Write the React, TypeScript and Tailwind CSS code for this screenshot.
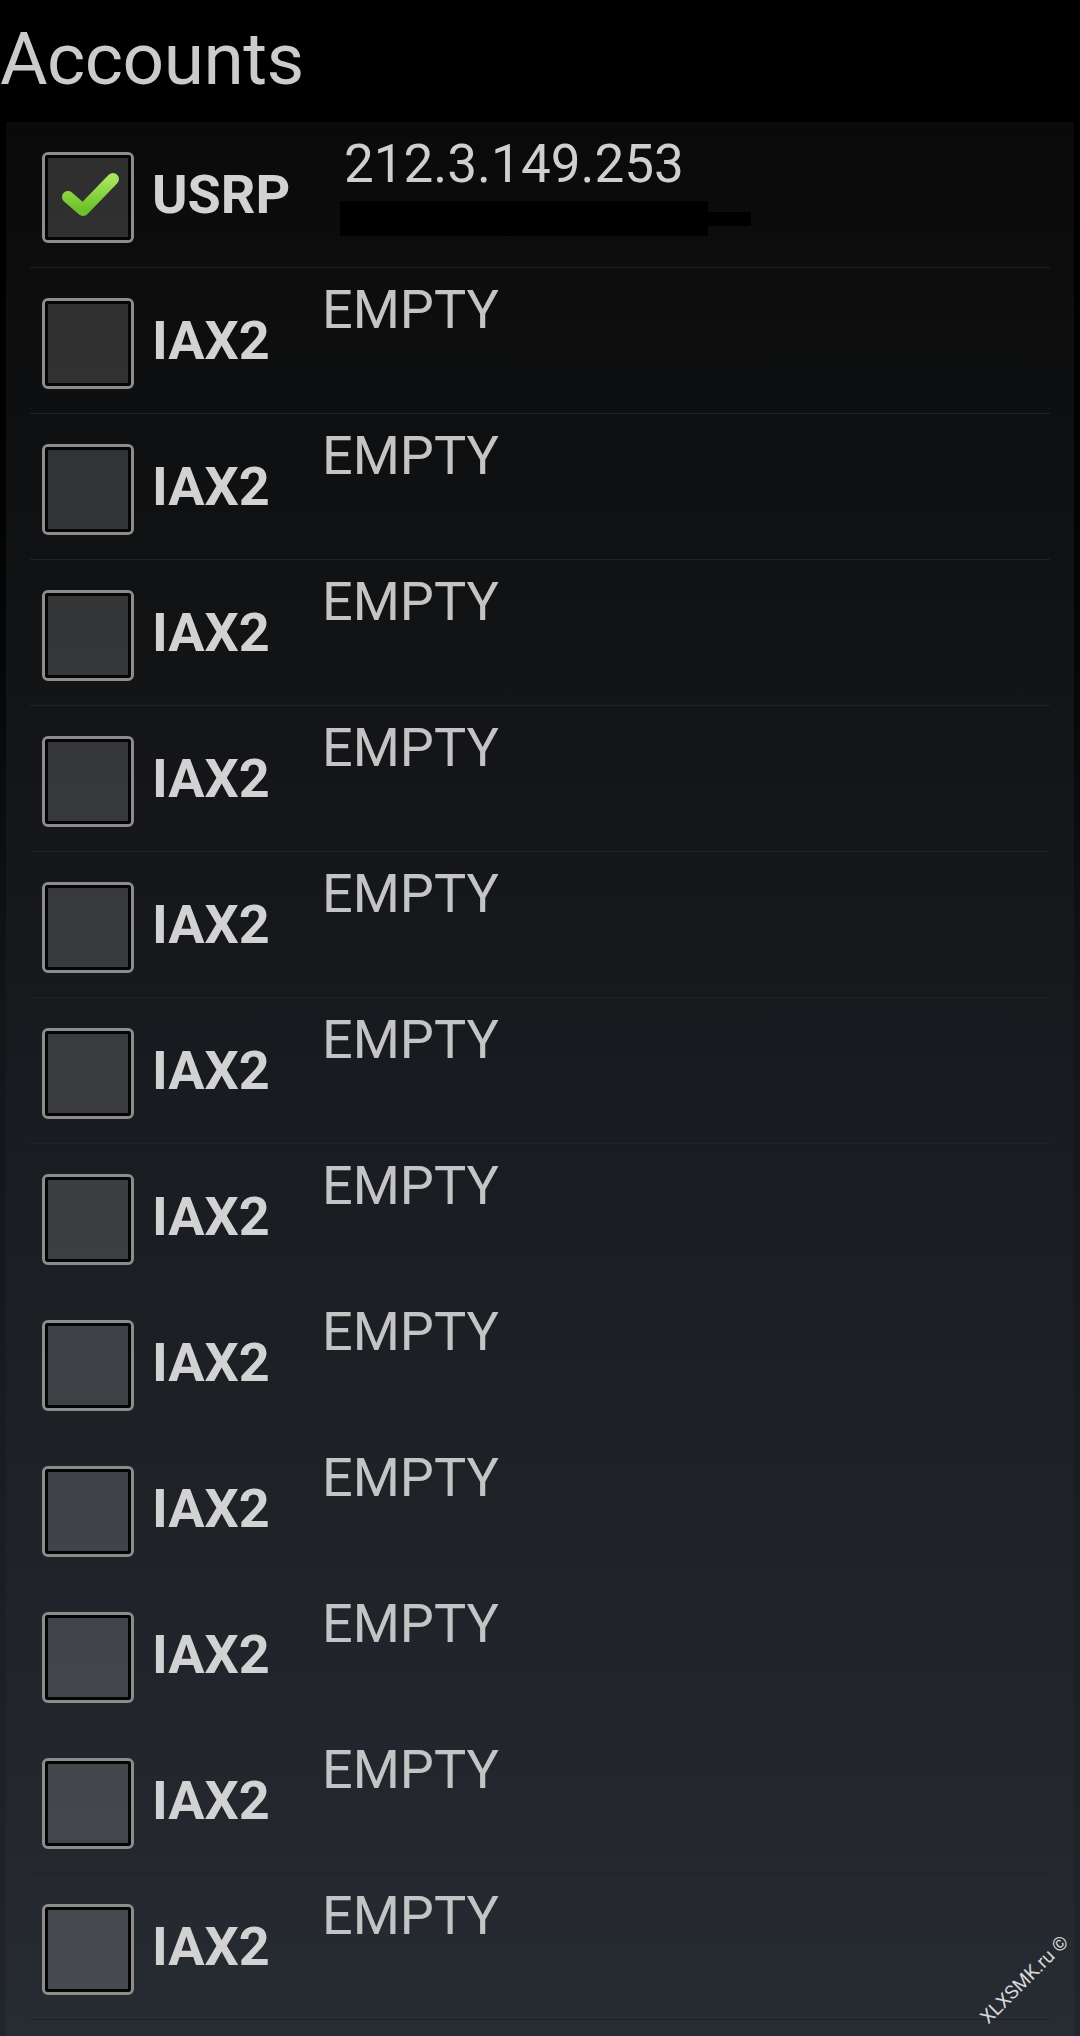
const accounts = [
  { proto: 'USRP', host: '212.3.149.253', checked: true },
  ...Array.from({ length: 12 }, () => ({ proto: 'IAX2', host: '', checked: false })),
];

function CheckBox({ checked }: { checked: boolean }) {
  return (
    <div className="mt-[30px] ml-[12px] h-[91px] w-[92px] shrink-0 rounded-[6px] border-[3px] border-[#8c8c8c]">
      <div className="relative h-full w-full rounded-[3px] border-[3px] border-[#050505] bg-white/15">
        {checked && (
          <svg viewBox="0 0 80 79" className="absolute inset-0 h-full w-full">
            <defs>
              <linearGradient id="chk" x1="0" y1="0" x2="0" y2="1">
                <stop offset="0" stopColor="#a6e55a" />
                <stop offset="1" stopColor="#6cc12a" />
              </linearGradient>
            </defs>
            <path
              d="M20 39 L35 52 L65 21"
              fill="none"
              stroke="url(#chk)"
              strokeWidth="12"
              strokeLinecap="round"
              strokeLinejoin="round"
            />
          </svg>
        )}
      </div>
    </div>
  );
}

function AccountRow({ proto, host, checked }: { proto: string; host: string; checked: boolean }) {
  const wide = proto === 'USRP';
  return (
    <div className="flex h-[146px] items-start border-b border-[#1f2226]">
      <CheckBox checked={checked} />
      <div
        className={`mt-[46px] ml-[18px] shrink-0 text-[54px] font-bold leading-none text-[#d2d2d2] ${
          wide ? 'w-[192px]' : 'w-[170px]'
        }`}
      >
        {proto}
      </div>
      {host ? (
        <div className="flex flex-col">
          <div className="mt-[16px] text-[53px] leading-none text-[#cfcfcf]">{host}</div>
          <div className="mt-[10px] -ml-[4px] flex items-center">
            <div className="h-[35px] w-[368px] bg-black" />
            <div className="h-[14px] w-[43px] bg-black" />
          </div>
        </div>
      ) : (
        <div className="mt-[15px] text-[54px] leading-none text-[#c4c4c4]">EMPTY</div>
      )}
    </div>
  );
}

export default function App() {
  return (
    <div
      className="relative h-[2036px] w-[1080px] overflow-hidden bg-gradient-to-b from-black via-[#131518] to-[#22252b] text-[#cfcfcf]"
      style={{ fontFamily: 'Roboto, "Noto Sans", sans-serif' }}
    >
      <header className="h-[122px] bg-black pt-[23px]">
        <h1 className="text-[73px] font-normal leading-none tracking-[-0.5px] text-[#cbcbcb]">Accounts</h1>
      </header>
      <div className="mx-[6px] h-[1914px] bg-gradient-to-b from-[#0a0a0a] via-[#181b1f] to-[#272b32] px-[24px]">
        {accounts.map((a, i) => (
          <AccountRow key={i} {...a} />
        ))}
      </div>
      <div className="absolute left-[1025px] top-[1980px] -translate-x-1/2 -translate-y-1/2 -rotate-45 whitespace-nowrap text-[19px] text-[#d6d6d6]">
        XLXSMK.ru ©
      </div>
    </div>
  );
}
